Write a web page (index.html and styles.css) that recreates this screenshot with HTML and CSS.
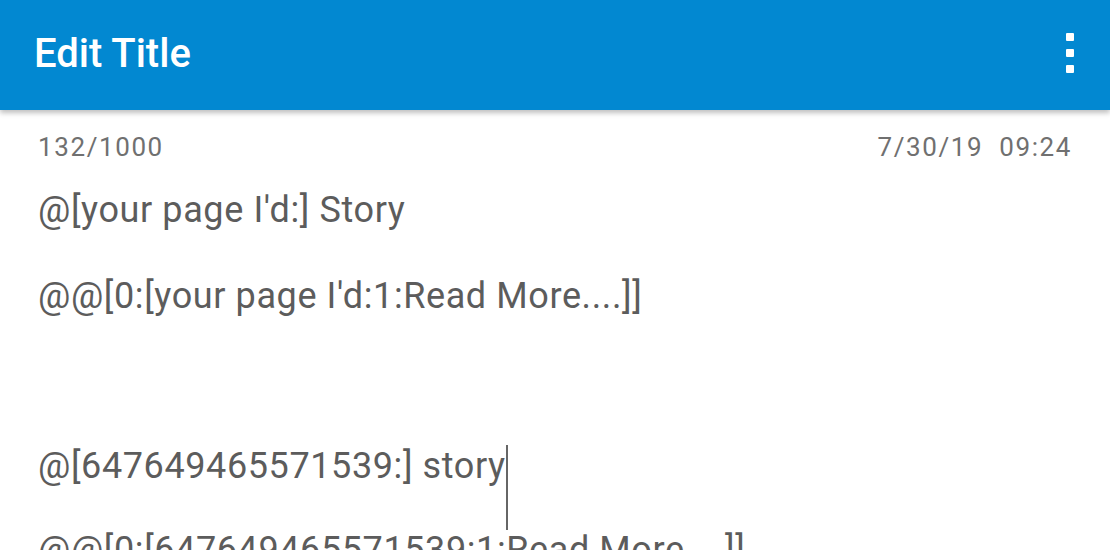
FILE: index.html
```html
<!doctype html>
<html>
    <head>
        <meta charset='utf-8'>
        <title>Edit Title</title>
        <link rel="stylesheet" href="styles.css">
    </head>
    <body>
        <div class='app'>
            <div class='toolbar'>
                <h1 class='toolbar-title'>Edit Title</h1>
                <div class='menu-btn'>
                    <span></span>
                    <span></span>
                    <span></span>
                </div>
            </div>
            <div class='editor'>
                <div class='meta'>
                    <span>132/1000</span>
                    <span>7/30/19&nbsp;&nbsp;09:24</span>
                </div>
                <div class='content'>
                    <p>@[your page I'd:] Story</p>
                    <p>@@[0:[your page I'd:1:Read More....]]</p>
                    <p>&nbsp;</p>
                    <p class='current'>@[647649465571539:] story<span class='caret'></span></p>
                    <p>@@[0:[647649465571539:1:Read More....]]</p>
                </div>
            </div>
        </div>
    </body>
</html>
```
FILE: styles.css
```css
html,body,p,h1 {
    padding:0px;
    margin:0px;
}
body {
    width:1110px;
    height:550px;
    overflow:hidden;
    background:#fff;
    font-family:Roboto,'Noto Sans',sans-serif;
}
.toolbar {
    height:110px;
    background:#0288d1;
    display:flex;
    align-items:center;
    justify-content:space-between;
    padding:0 34px;
    box-shadow:0 3px 5px rgba(0,0,0,0.25);
    position:relative;
}
.toolbar-title {
    color:#fff;
    font-size:40px;
    font-weight:500;
    margin-top:-4px;
}
.menu-btn {
    display:flex;
    flex-direction:column;
    gap:8px;
    margin-right:2px;
    margin-top:-5px;
}
.menu-btn span {
    width:8px;
    height:8px;
    border-radius:1px;
    background:#fff;
}
.editor {
    padding:0 38px;
}
.meta {
    display:flex;
    justify-content:space-between;
    padding-top:22px;
    font-size:26px;
    line-height:30px;
    letter-spacing:1.6px;
    color:#707070;
}
.content {
    margin-top:5px;
    font-size:36px;
    letter-spacing:0.6px;
    color:#5c5c5c;
}
.content p {
    line-height:86px;
    white-space:nowrap;
}
.content p.current {
    line-height:82px;
}
.caret {
    display:inline-block;
    width:2px;
    height:85px;
    background:#666;
    vertical-align:top;
    margin-top:20px;
    margin-bottom:-23px;
}
```
